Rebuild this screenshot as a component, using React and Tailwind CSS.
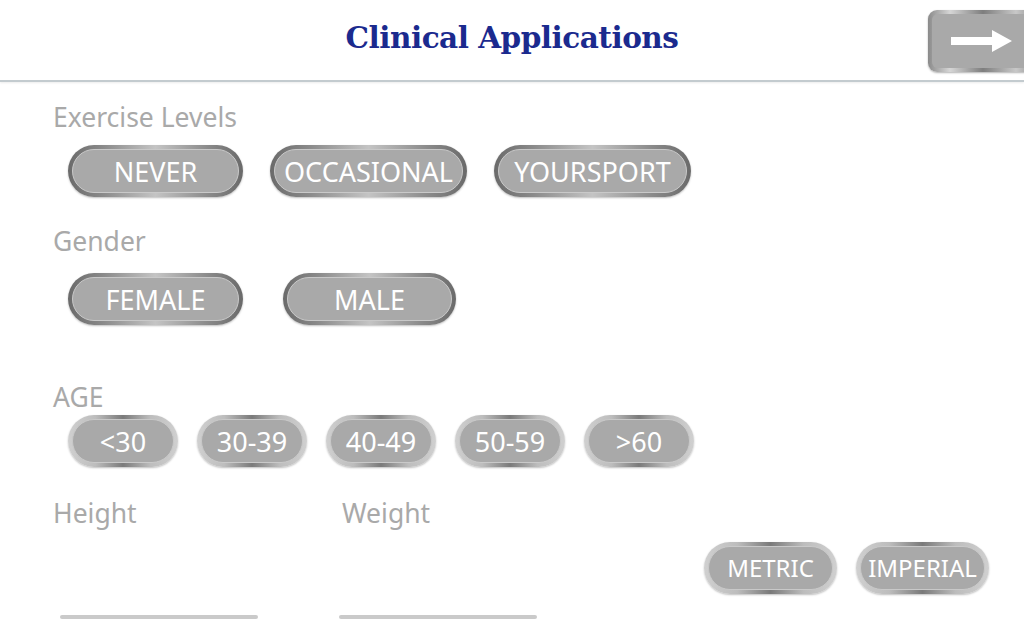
import React from 'react';

const darkRing = 'bg-[linear-gradient(90deg,#6a6a6a_0%,#8a8a8a_20%,#c4c4c4_50%,#8a8a8a_80%,#6a6a6a_100%)]';
const lightRing = 'bg-[linear-gradient(90deg,#d0d0d0_0%,#bdbdbd_25%,#7a7a7a_50%,#bdbdbd_75%,#d0d0d0_100%)]';

function Pill({ label, width, dark, small }) {
  return (
    <div className={`h-[52px] shrink-0 rounded-full p-[4px] shadow-[0_1px_2px_rgba(0,0,0,0.25)] ${dark ? darkRing : lightRing}`} style={{ width }}>
      <div className={`flex h-full w-full items-center justify-center rounded-full border border-[#c9c9c9] bg-[#a9a9a9] leading-none text-white ${small ? 'text-[24px]' : 'text-[27px]'}`}>
        {label}
      </div>
    </div>
  );
}

function Label({ children, className = '' }) {
  return <div className={`text-[26.5px] leading-[28px] text-[#a9a9a9] ${className}`}>{children}</div>;
}

export default function App() {
  const ages = ['<30', '30-39', '40-49', '50-59', '>60'];
  return (
    <div className="h-[640px] w-[1024px] overflow-hidden bg-white" style={{ fontFamily: '"Noto Sans", "Open Sans", sans-serif' }}>
      <header className="relative flex h-[82px] items-center justify-center border-b-2 border-[#c3cbcf] shadow-[0_1px_2px_rgba(0,0,0,0.08)]">
        <h1 className="pb-[4px] text-[29.5px] font-bold text-[#1b2a8e]" style={{ fontFamily: '"DejaVu Serif", "Liberation Serif", serif', letterSpacing: '-0.5px' }}>
          Clinical Applications
        </h1>
        <div className="absolute left-[928px] top-[10px] h-[62px] w-[110px] rounded-[9px] bg-[linear-gradient(90deg,#8a8a8a_0%,#d6d6d6_20%,#7e7e7e_50%,#c8c8c8_80%,#8a8a8a_100%)] p-[4px] shadow-[0_1px_2px_rgba(0,0,0,0.3)]">
          <div className="flex h-full w-full items-center rounded-[6px] bg-[#a9a9a9] pl-[17px]">
            <svg width="64" height="24" viewBox="0 0 64 24">
              <path d="M2 8h41V1l20 11-20 11v-7H2z" fill="#fff" />
            </svg>
          </div>
        </div>
      </header>

      <main className="px-[53px]">
        <Label className="mt-[21px]">Exercise Levels</Label>
        <div className="ml-[15px] mt-[14px] flex gap-[27px]">
          <Pill label="NEVER" width={175} dark />
          <Pill label="OCCASIONAL" width={197} dark />
          <Pill label="YOURSPORT" width={197} dark />
        </div>

        <Label className="mt-[30px]">Gender</Label>
        <div className="ml-[15px] mt-[18px] flex gap-[40px]">
          <Pill label="FEMALE" width={175} dark />
          <Pill label="MALE" width={173} dark />
        </div>

        <Label className="mt-[58px]">AGE</Label>
        <div className="ml-[15px] mt-[4px] flex gap-[19px]">
          {ages.map(a => <Pill key={a} label={a} width={110} />)}
        </div>

        <div className="mt-[32px] flex">
          <div className="w-[289px] shrink-0">
            <Label>Height</Label>
            <div className="ml-[7px] mt-[88px] h-[4px] w-[198px] rounded-full bg-[#cacaca]" />
          </div>
          <div className="w-[300px] shrink-0">
            <Label>Weight</Label>
            <div className="ml-[-3px] mt-[88px] h-[4px] w-[198px] rounded-full bg-[#cacaca]" />
          </div>
          <div className="ml-[62px] mt-[43px] flex shrink-0 gap-[19px]">
            <Pill label="METRIC" width={133} small />
            <Pill label="IMPERIAL" width={133} small />
          </div>
        </div>
      </main>
    </div>
  );
}
